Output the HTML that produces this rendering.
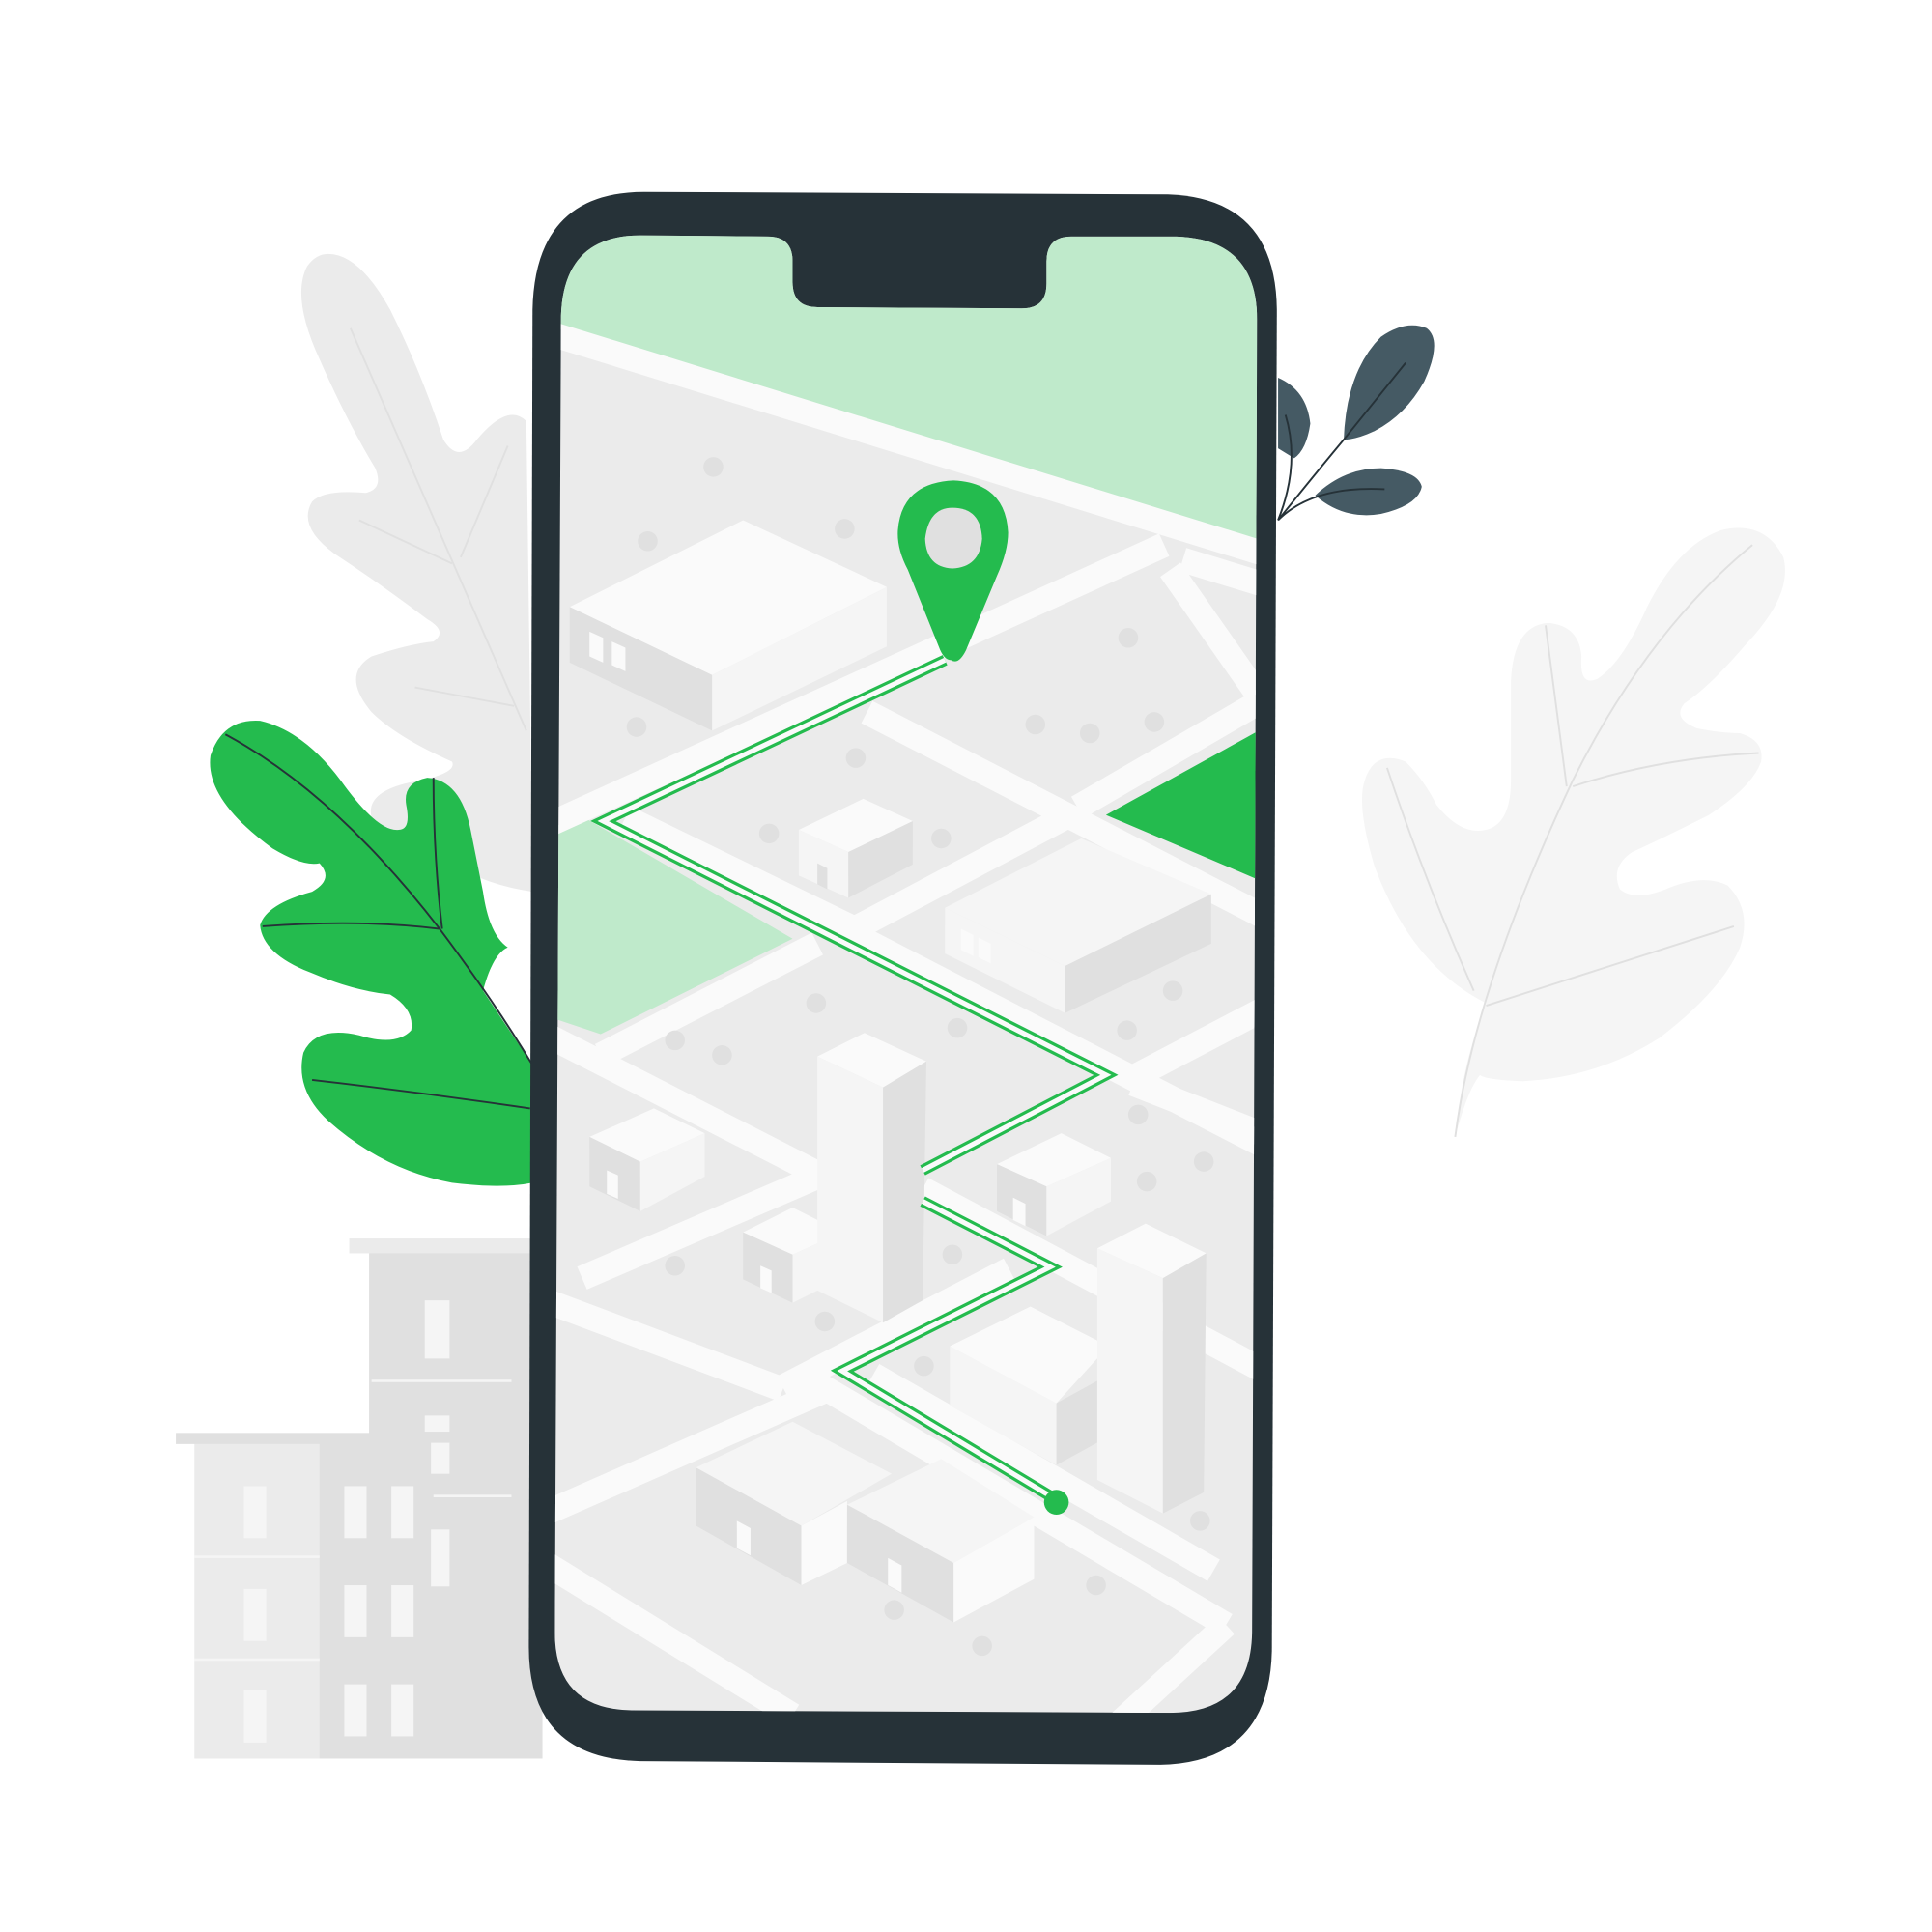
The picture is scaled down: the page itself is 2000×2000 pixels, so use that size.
<!DOCTYPE html>
<html><head><meta charset="utf-8"><style>
html,body{margin:0;padding:0;background:#fff;}
svg{display:block}
</style></head><body>
<svg width="2000" height="2000" viewBox="0 0 1560 1560" xmlns="http://www.w3.org/2000/svg">
<defs>
<clipPath id="scr"><path d="M517,190 L620,191 Q640,191 640,211 L640,228 Q640,248 660,248 L825,249 Q845,249 845,229 L845,211 Q845,191 865,191 L950,191 Q1015,193 1015,258 L1011,1318 Q1010,1383 945,1383 L510,1381 Q448,1380 448,1318 L453,255 Q455,190 517,190Z"/></clipPath>
</defs>
<rect width="1560" height="1560" fill="#fff"/>
<!-- gray leaf left -->
<path d="M265,205 Q290,205 315,250 Q340,300 358,355 Q370,375 385,355 Q410,325 425,340 L430,720 Q395,715 370,700 Q330,690 300,660 Q295,640 330,632 Q370,625 365,615 Q320,595 300,575 Q275,545 300,530 Q330,520 350,518 Q362,510 345,500 Q305,470 270,447 Q240,425 252,405 Q262,395 295,398 Q310,395 303,378 Q280,340 258,290 Q235,240 248,215 Q255,205 265,205Z" fill="#ebebeb"/>
<path d="M283,265 L425,590 M290,420 L365,455 M372,450 L410,360 M335,555 L415,570" stroke="#e0e0e0" stroke-width="1.5" fill="none"/>
<!-- right pale leaf -->
<path d="M1175,918 Q1180,860 1200,810 Q1140,780 1110,700 Q1095,650 1102,630 Q1110,605 1135,615 Q1150,630 1160,650 Q1180,675 1200,670 Q1220,665 1220,630 L1220,550 Q1222,505 1250,503 Q1275,505 1277,530 Q1275,555 1290,548 Q1310,535 1330,490 Q1355,440 1390,428 Q1425,420 1440,450 Q1448,480 1410,520 Q1380,555 1360,568 Q1350,580 1370,588 Q1390,592 1405,592 Q1425,598 1422,615 Q1415,635 1380,658 Q1340,678 1318,688 Q1300,700 1308,718 Q1320,728 1345,718 Q1375,705 1395,715 Q1415,735 1405,765 Q1390,800 1340,838 Q1290,870 1230,873 Q1200,872 1195,868 Q1185,880 1175,918Z" fill="#f5f5f5"/>
<path d="M1175,918 Q1190,800 1270,630 Q1330,510 1415,440 M1190,800 Q1150,710 1120,620 M1265,635 Q1255,560 1248,505 M1270,635 Q1340,612 1420,608 M1200,812 Q1300,780 1400,748" stroke="#e0e0e0" stroke-width="1.5" fill="none"/>
<!-- green leaf -->
<path d="M430,860 Q410,830 390,800 Q398,770 410,765 Q395,755 390,720 L380,670 Q372,630 345,628 Q325,632 328,650 Q332,670 322,670 Q305,672 275,630 Q245,590 210,582 Q180,580 170,610 Q165,645 220,685 Q245,700 258,697 Q270,710 252,720 Q215,730 210,747 Q212,770 250,785 Q285,800 315,803 Q335,815 332,832 Q320,845 290,836 Q255,828 245,850 Q238,880 265,905 Q310,945 365,955 Q405,960 430,955Z" fill="#24bb4e"/>
<path d="M182,593 Q270,640 355,750 Q400,810 430,860 M350,628 Q350,690 357,750 M212,748 Q290,742 355,750 M252,872 Q340,882 428,895" stroke="#263238" stroke-width="1.5" fill="none"/>
<!-- dark leaves -->
<path d="M1032,305 Q1055,315 1058,342 Q1055,363 1045,370 L1032,362Z" fill="#455a64"/>
<path d="M1085,355 Q1087,300 1115,272 Q1135,258 1152,265 Q1165,275 1150,308 Q1135,335 1110,348 Q1095,355 1085,355Z" fill="#455a64"/>
<path d="M1062,400 Q1085,378 1115,378 Q1145,380 1148,393 Q1145,408 1115,415 Q1085,420 1062,400Z" fill="#455a64"/>
<path d="M1032,420 Q1060,385 1085,355 L1135,293 M1032,420 Q1060,392 1118,395 M1032,420 Q1050,375 1038,335" stroke="#263238" stroke-width="1.5" fill="none"/>
<!-- left buildings -->
<rect x="298" y="1010" width="140" height="410" fill="#e0e0e0"/>
<rect x="282" y="1000" width="160" height="12" fill="#ebebeb"/>
<rect x="157" y="1165" width="143" height="255" fill="#ebebeb"/>
<rect x="142" y="1157" width="160" height="9" fill="#e0e0e0"/>
<rect x="258" y="1165" width="92" height="255" fill="#e0e0e0"/>
<path d="M157,1257 H258 M157,1340 H258 M300,1115 H413 M350,1208 H413" stroke="#f5f5f5" stroke-width="2"/>
<g fill="#f5f5f5"><rect x="343" y="1050" width="20" height="47"/><rect x="343" y="1143" width="20" height="13"/><rect x="348" y="1165" width="15" height="25"/><rect x="348" y="1235" width="15" height="46"/>
<rect x="197" y="1200" width="18" height="42"/><rect x="197" y="1283" width="18" height="42"/><rect x="197" y="1365" width="18" height="42"/>
<rect x="278" y="1200" width="18" height="42"/><rect x="316" y="1200" width="18" height="42"/><rect x="278" y="1280" width="18" height="42"/><rect x="316" y="1280" width="18" height="42"/><rect x="278" y="1360" width="18" height="42"/><rect x="316" y="1360" width="18" height="42"/></g>
<!-- phone -->
<path d="M520,155 L943,157 Q1030,160 1031,250 L1027,1333 Q1025,1423 937,1425 L517,1422 Q427,1420 427,1330 L430,250 Q432,155 520,155Z" fill="#263238"/>
<g clip-path="url(#scr)">
<rect x="440" y="180" width="590" height="1220" fill="#ebebeb"/>
<polygon points="440,180 1030,180 1030,445 440,262" fill="#bfeacb"/>
<polygon points="440,668 475,662 640,758 485,835 440,820" fill="#bfeacb"/>
<g stroke="#fafafa" stroke-width="20" fill="none" stroke-linecap="butt">
<path d="M440,268 L1030,450"/>
<path d="M445,665 L940,440"/>
<path d="M955,452 L1030,475"/>
<path d="M945,460 L1015,560"/>
<path d="M700,575 L1030,745"/>
<path d="M870,652 L1020,565"/>
<path d="M505,660 L690,750 L860,660"/>
<path d="M690,755 L1030,930"/>
<path d="M440,835 L665,950"/>
<path d="M485,852 L660,762"/>
<path d="M915,870 L1020,815"/>
<path d="M915,875 L1030,920"/>
<path d="M440,1050 L632,1122"/>
<path d="M470,1032 L665,948"/>
<path d="M632,1120 L815,1025"/>
<path d="M440,1222 L668,1122 L990,1312"/>
<path d="M705,1110 L980,1268"/>
<path d="M745,960 L1030,1112"/>
<path d="M440,1262 L640,1385"/>
<path d="M990,1312 L905,1390"/>
</g>
<polygon points="893,658 1020,588 1020,712" fill="#24bb4e"/>
<!-- trees -->
<g fill="#e0e0e0"><circle cx="576" cy="377" r="8"/><circle cx="523" cy="437" r="8"/><circle cx="682" cy="427" r="8"/><circle cx="911" cy="515" r="8"/><circle cx="836" cy="585" r="8"/><circle cx="880" cy="592" r="8"/><circle cx="932" cy="583" r="8"/><circle cx="514" cy="587" r="8"/><circle cx="691" cy="612" r="8"/><circle cx="621" cy="673" r="8"/><circle cx="760" cy="677" r="8"/><circle cx="947" cy="800" r="8"/><circle cx="910" cy="832" r="8"/><circle cx="659" cy="810" r="8"/><circle cx="545" cy="840" r="8"/><circle cx="583" cy="852" r="8"/><circle cx="773" cy="830" r="8"/><circle cx="919" cy="900" r="8"/><circle cx="972" cy="938" r="8"/><circle cx="926" cy="954" r="8"/><circle cx="545" cy="1022" r="8"/><circle cx="769" cy="1013" r="8"/><circle cx="666" cy="1067" r="8"/><circle cx="746" cy="1103" r="8"/><circle cx="969" cy="1228" r="8"/><circle cx="885" cy="1280" r="8"/><circle cx="722" cy="1300" r="8"/><circle cx="793" cy="1329" r="8"/></g>
<!-- buildings -->
<g>
<polygon points="460,490 600,420 716,474 575,545" fill="#fafafa"/>
<polygon points="460,490 575,545 575,590 460,535" fill="#e0e0e0"/>
<polygon points="575,545 716,474 716,522 575,590" fill="#f5f5f5"/>
<polygon points="476,510 487,515 487,535 476,530" fill="#fafafa"/><polygon points="494,518 505,523 505,542 494,537" fill="#fafafa"/>

<polygon points="645,670 697,645 737,663 685,688" fill="#fafafa"/>
<polygon points="645,670 685,688 685,725 645,707" fill="#f5f5f5"/>
<polygon points="685,688 737,663 737,698 685,725" fill="#e0e0e0"/>
<polygon points="660,697 668,701 668,718 660,714" fill="#e0e0e0"/>

<polygon points="763,733 873,677 978,722 860,780" fill="#f5f5f5"/>
<polygon points="763,733 860,780 860,818 763,770" fill="#f5f5f5"/>
<polygon points="860,780 978,722 978,762 860,818" fill="#e0e0e0"/>
<polygon points="776,750 786,755 786,772 776,767" fill="#fafafa"/><polygon points="790,757 800,762 800,778 790,773" fill="#fafafa"/>

<polygon points="476,918 528,895 569,915 517,938" fill="#fafafa"/>
<polygon points="476,918 517,938 517,978 476,958" fill="#e0e0e0"/>
<polygon points="517,938 569,915 569,950 517,978" fill="#f5f5f5"/>
<polygon points="490,945 499,949 499,968 490,964" fill="#fafafa"/>

<polygon points="600,995 640,975 680,995 640,1013" fill="#fafafa"/>
<polygon points="600,995 640,1013 640,1052 600,1033" fill="#e0e0e0"/>
<polygon points="640,1013 680,995 680,1032 640,1052" fill="#f5f5f5"/>
<polygon points="614,1022 623,1026 623,1044 614,1040" fill="#fafafa"/>

<polygon points="805,940 857,915 897,935 845,958" fill="#fafafa"/>
<polygon points="805,940 845,958 845,998 805,978" fill="#e0e0e0"/>
<polygon points="845,958 897,935 897,970 845,998" fill="#f5f5f5"/>
<polygon points="818,967 828,972 828,990 818,985" fill="#fafafa"/>

<polygon points="767,1087 832,1055 895,1087 853,1110" fill="#fafafa"/>
<polygon points="767,1087 853,1133 853,1183 767,1135" fill="#f5f5f5"/>
<polygon points="767,1087 832,1055 895,1087 853,1133" fill="#fafafa"/>
<polygon points="853,1133 895,1110 895,1160 853,1183" fill="#e0e0e0"/>

<polygon points="660,853 698,834 748,857 713,878" fill="#fafafa"/>
<polygon points="660,853 713,878 713,1068 660,1042" fill="#f5f5f5"/>
<polygon points="713,878 748,857 745,1050 713,1068" fill="#e0e0e0"/>

<polygon points="886,1008 925,988 974,1012 939,1032" fill="#fafafa"/>
<polygon points="886,1008 939,1032 939,1222 886,1195" fill="#f5f5f5"/>
<polygon points="939,1032 974,1012 972,1205 939,1222" fill="#e0e0e0"/>

<polygon points="562,1185 640,1148 720,1190 647,1232" fill="#f5f5f5"/>
<polygon points="562,1185 647,1232 647,1280 562,1232" fill="#e0e0e0"/>
<polygon points="647,1232 684,1212 684,1262 647,1280" fill="#fafafa"/>
<polygon points="595,1228 606,1234 606,1256 595,1250" fill="#fafafa"/>
<polygon points="684,1215 760,1178 835,1225 770,1262" fill="#f5f5f5"/>
<polygon points="684,1215 770,1262 770,1310 684,1262" fill="#e0e0e0"/>
<polygon points="770,1262 835,1225 835,1275 770,1310" fill="#fafafa"/>
<polygon points="717,1258 728,1264 728,1286 717,1280" fill="#fafafa"/>
</g>
<!-- route -->
<g fill="none" stroke-linejoin="miter">
<path d="M763,533 L487,663 L893,868 L745,945 M745,970 L848,1023 L680,1107 L848,1208" stroke="#24bb4e" stroke-width="9"/>
<path d="M763,533 L487,663 L893,868 L745,945 M745,970 L848,1023 L680,1107 L848,1208" stroke="#fafafa" stroke-width="4"/>
</g>
<circle cx="853" cy="1213" r="10" fill="#24bb4e"/>
<!-- pin -->
<path d="M770,388 Q812,390 814,430 Q814,445 805,465 L780,525 Q774,537 768,533 Q762,533 758,522 L733,460 Q724,443 725,428 Q728,390 770,388Z" fill="#24bb4e"/>
<path d="M769,410 Q792,410 793,435 Q791,458 769,459 Q748,458 747,435 Q750,410 769,410Z" fill="#e0e0e0"/>
</g>
</svg>
</body></html>
